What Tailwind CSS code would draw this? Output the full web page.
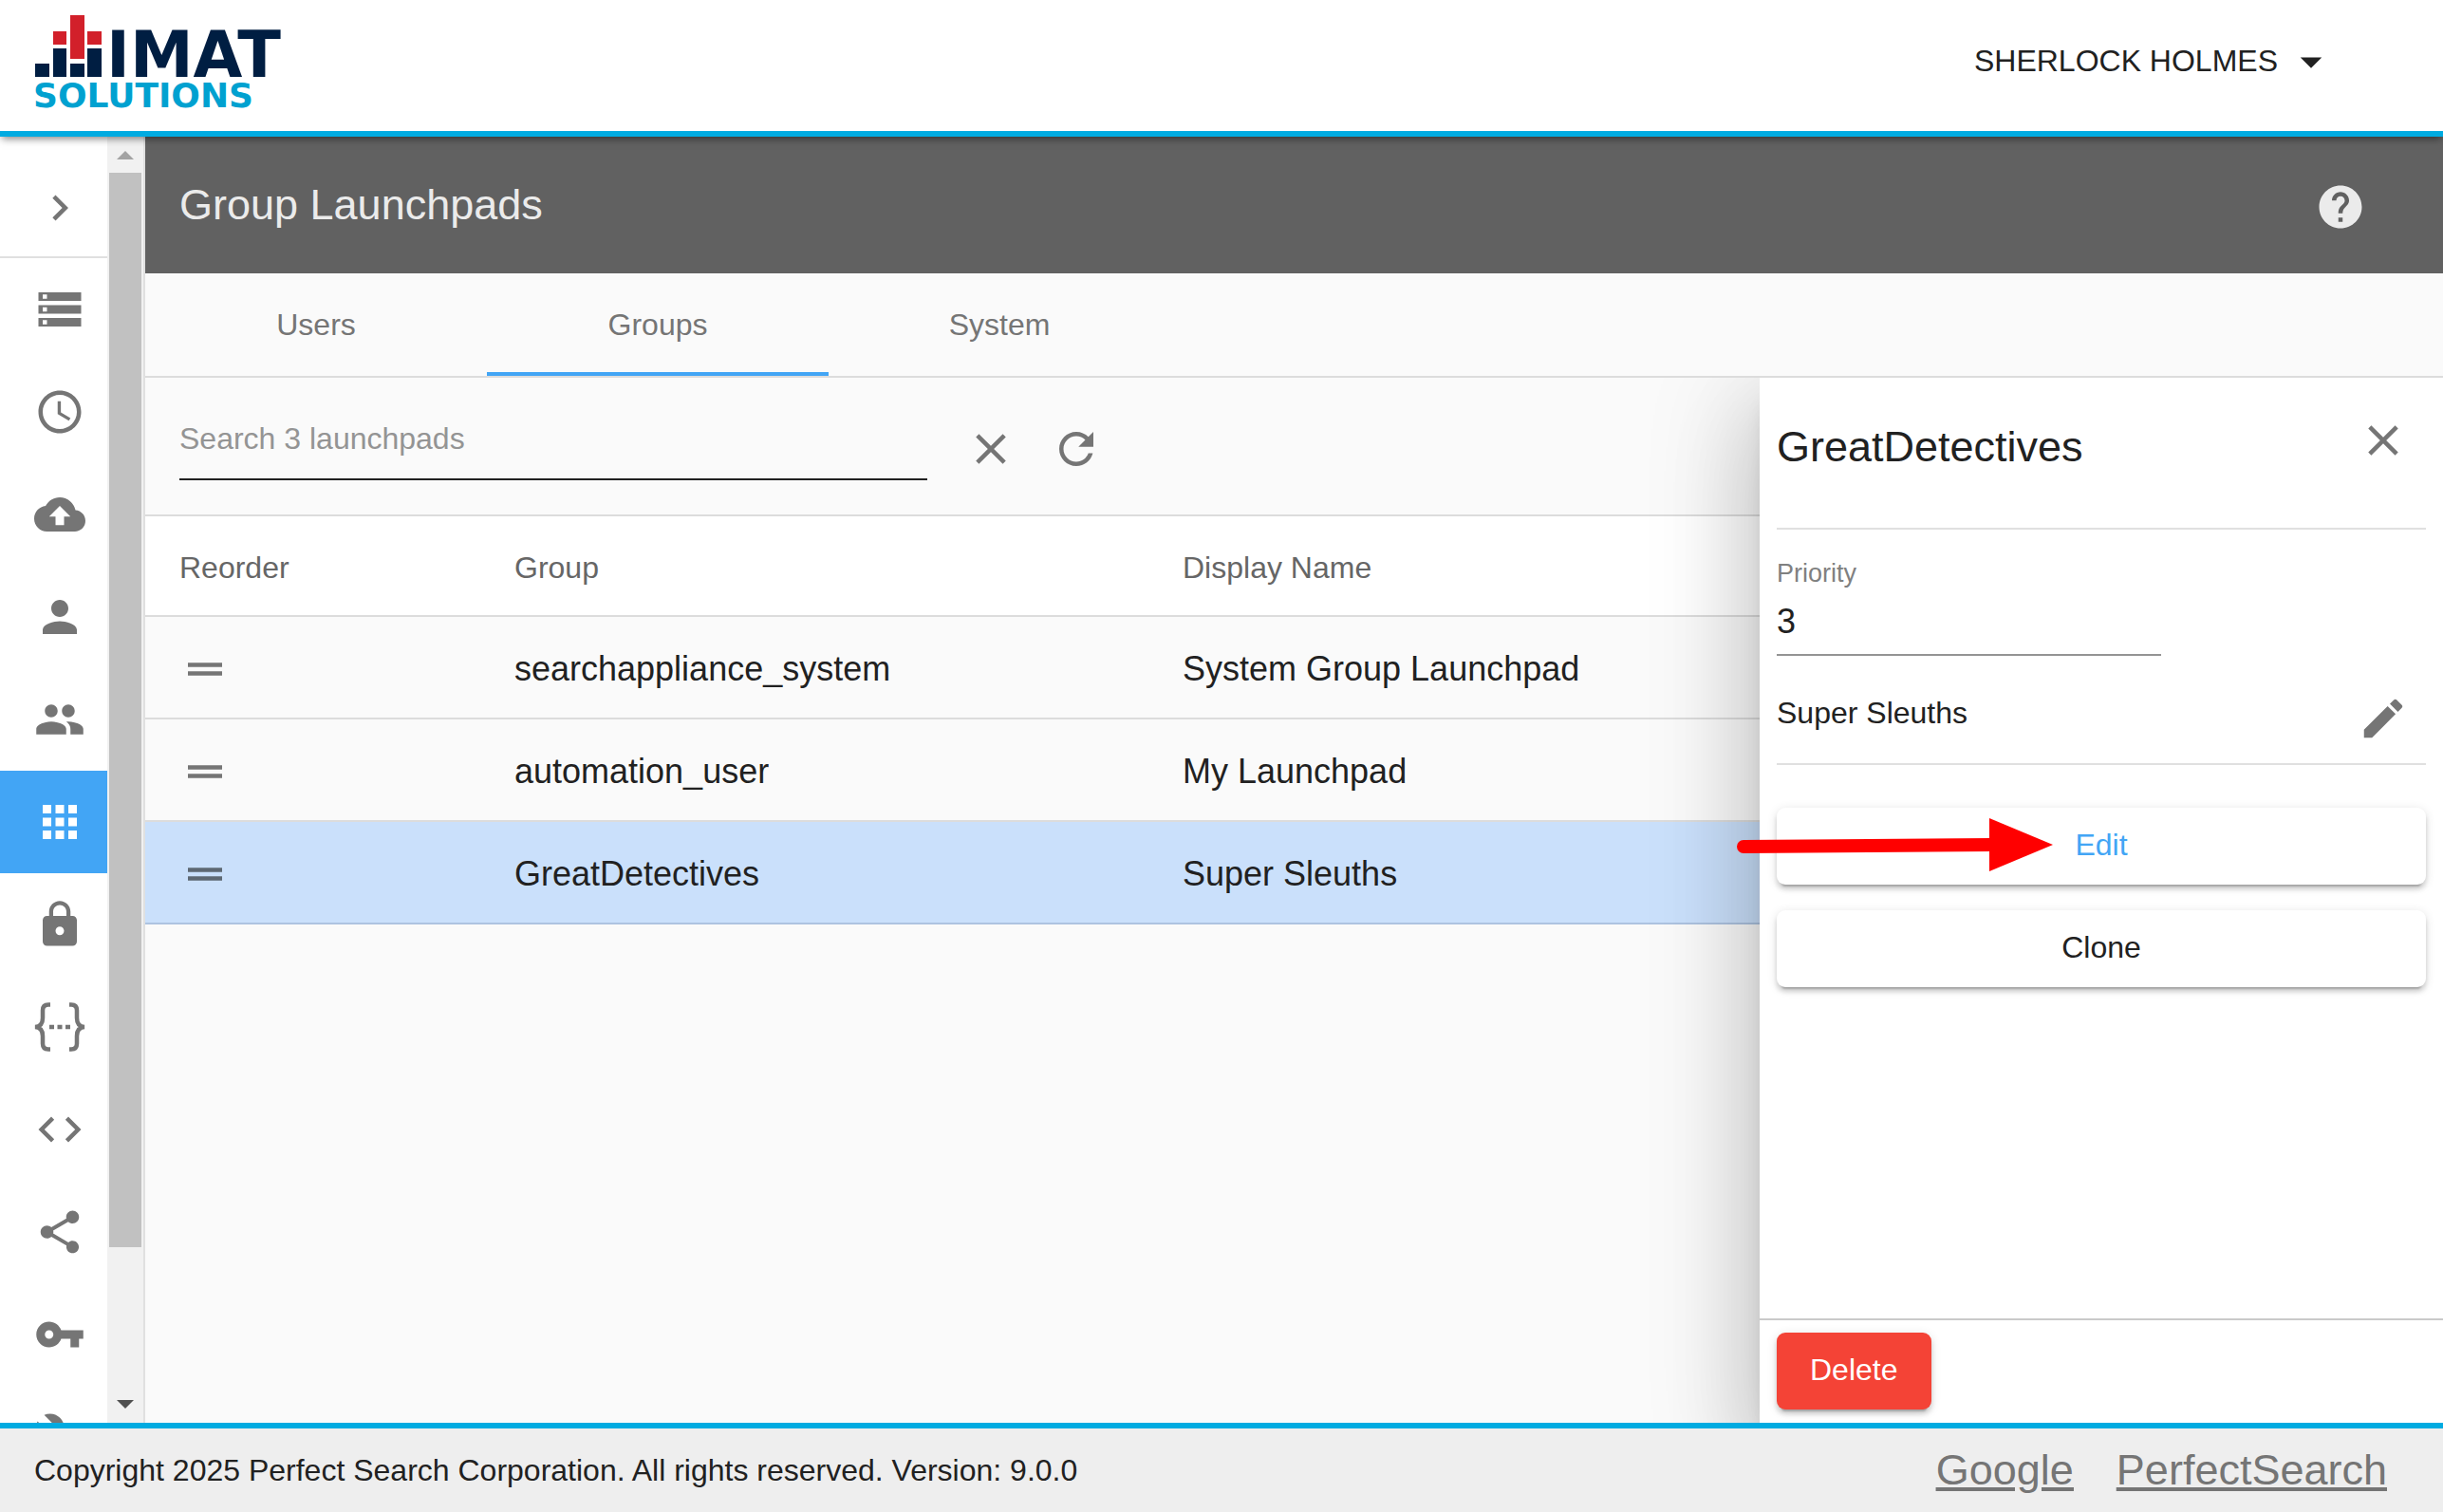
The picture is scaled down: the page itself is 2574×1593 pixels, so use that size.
<!DOCTYPE html>
<html lang="en">
<head>
<meta charset="utf-8">
<meta name="viewport" content="width=device-width, initial-scale=1">
<title>Group Launchpads</title>
<script src="https://cdn.jsdelivr.net/npm/@tailwindcss/browser@4"></script>
</head>
<body class="flex h-screen flex-col overflow-hidden bg-white font-['Liberation_Sans',Arial,sans-serif] text-[32px] leading-10 text-[#212121]">

<header class="relative z-20 flex h-36 shrink-0 items-start justify-between border-b-6 border-[#00abe1] bg-white pr-28 pl-9 shadow-[0_4px_8px_-2px_rgba(0,0,0,0.5)]">
  <a href="#" aria-label="IMAT Solutions" class="flex flex-col pt-4">
    <svg viewBox="0 0 290 110" class="h-[110px] w-[290px] overflow-visible" role="img">
      <g fill="#001e42">
        <rect x="1" y="51" width="15" height="14"/>
        <rect x="20" y="35" width="14" height="30"/>
        <rect x="38" y="51" width="15" height="14"/>
        <rect x="56" y="35" width="15" height="30"/>
      </g>
      <g fill="#d2202a">
        <rect x="20" y="17" width="14" height="14"/>
        <rect x="38" y="0" width="15" height="46"/>
        <rect x="56" y="17" width="15" height="14"/>
      </g>
      <text x="76" y="65" fill="#001e42" class="font-['DejaVu_Sans',sans-serif] text-[67px] font-bold">IMAT</text>
      <text x="-1" y="97" fill="#00a1d0" class="font-['DejaVu_Sans',sans-serif] text-[36px] font-bold">SOLUTIONS</text>
    </svg>
  </a>
  <button type="button" class="flex items-center gap-2 pt-[38px]">
    <span class="pb-[3px]">SHERLOCK HOLMES</span>
    <svg viewBox="0 0 24 24" class="size-[54px] fill-current"><path d="M7 10l5 5 5-5z"/></svg>
  </button>
</header>

<div class="flex min-h-0 flex-1">
  <aside class="flex w-[153px] shrink-0 border-r-2 border-[#e0e0e0] bg-white">
    <nav class="flex w-[113px] flex-col overflow-hidden text-[#757575]" aria-label="Main">
      <button type="button" aria-label="Expand" class="flex h-32 shrink-0 items-center justify-center border-b-2 border-[#e0e0e0] pt-6 pl-3">
        <svg viewBox="0 0 24 24" class="size-[54px] fill-current"><path d="M10 6L8.590 7.410 13.170 12l-4.580 4.590L10 18l6-6z"/></svg>
      </button>
      <a href="#" aria-label="Storage" class="flex h-[108px] shrink-0 items-center pl-9"><svg viewBox="0 0 24 24" class="size-[54px] fill-current"><path d="M2 20h20v-4H2v4zm2-3h2v2H4v-2zM2 4v4h20V4H2zm4 3H4V5h2v2zm-4 7h20v-4H2v4zm2-3h2v2H4v-2z"/></svg></a>
      <a href="#" aria-label="Schedule" class="flex h-[108px] shrink-0 items-center pl-9"><svg viewBox="0 0 24 24" class="size-[54px] fill-current"><path d="M11.990 2C6.470 2 2 6.480 2 12s4.470 10 9.990 10C17.520 22 22 17.520 22 12S17.520 2 11.990 2zM12 20c-4.420 0-8-3.580-8-8s3.580-8 8-8 8 3.580 8 8-3.580 8-8 8zm.5-13H11v6l5.250 3.150.750-1.230-4.500-2.670z"/></svg></a>
      <a href="#" aria-label="Upload" class="flex h-[108px] shrink-0 items-center pl-9"><svg viewBox="0 0 24 24" class="size-[54px] fill-current"><path d="M19.350 10.040C18.670 6.590 15.640 4 12 4 9.110 4 6.600 5.640 5.350 8.040 2.340 8.360 0 10.910 0 14c0 3.310 2.690 6 6 6h13c2.760 0 5-2.240 5-5 0-2.640-2.050-4.780-4.650-4.960zM14 13v4h-4v-4H7l5-5 5 5h-3z"/></svg></a>
      <a href="#" aria-label="Users" class="flex h-[108px] shrink-0 items-center pl-9"><svg viewBox="0 0 24 24" class="size-[54px] fill-current"><path d="M12 12c2.210 0 4-1.790 4-4s-1.790-4-4-4-4 1.790-4 4 1.790 4 4 4zm0 2c-2.670 0-8 1.340-8 4v2h16v-2c0-2.660-5.330-4-8-4z"/></svg></a>
      <a href="#" aria-label="Groups" class="flex h-[108px] shrink-0 items-center pl-9"><svg viewBox="0 0 24 24" class="size-[54px] fill-current"><path d="M16 11c1.660 0 2.990-1.340 2.990-3S17.660 5 16 5c-1.660 0-3 1.340-3 3s1.340 3 3 3zm-8 0c1.660 0 2.990-1.340 2.990-3S9.660 5 8 5C6.340 5 5 6.340 5 8s1.340 3 3 3zm0 2c-2.330 0-7 1.170-7 3.500V19h14v-2.500c0-2.330-4.670-3.500-7-3.500zm8 0c-.290 0-.620.020-.970.050 1.160.840 1.970 1.970 1.970 3.450V19h6v-2.500c0-2.330-4.670-3.500-7-3.500z"/></svg></a>
      <a href="#" aria-label="Launchpads" aria-current="page" class="flex h-[108px] shrink-0 items-center bg-[#42a5f5] pl-9 text-white"><svg viewBox="0 0 24 24" class="size-[54px] fill-current"><path d="M4 8h4V4H4v4zm6 12h4v-4h-4v4zm-6 0h4v-4H4v4zm0-6h4v-4H4v4zm6 0h4v-4h-4v4zm6-10v4h4V4h-4zm-6 4h4V4h-4v4zm6 6h4v-4h-4v4zm0 6h4v-4h-4v4z"/></svg></a>
      <a href="#" aria-label="Security" class="flex h-[108px] shrink-0 items-center pl-9"><svg viewBox="0 0 24 24" class="size-[54px] fill-current"><path d="M18 8h-1V6c0-2.760-2.240-5-5-5S7 3.240 7 6v2H6c-1.100 0-2 .900-2 2v10c0 1.100.900 2 2 2h12c1.100 0 2-.900 2-2V10c0-1.100-.900-2-2-2zm-6 9c-1.100 0-2-.900-2-2s.900-2 2-2 2 .900 2 2-.900 2-2 2zm3.100-9H8.900V6c0-1.710 1.390-3.100 3.100-3.100 1.710 0 3.100 1.390 3.100 3.100v2z"/></svg></a>
      <a href="#" aria-label="Variables" class="flex h-[108px] shrink-0 items-center pl-9"><svg viewBox="0 0 54 54" class="size-[54px]" fill="none" stroke="currentColor" stroke-width="4.500"><path d="M17 3.500h-2q-6 0-6 6v8q0 9-8 9.500 8 .500 8 9.500v8q0 6 6 6h2M37 3.500h2q6 0 6 6v8q0 9 8 9.500-8 .500-8 9.500v8q0 6-6 6h-2"/><path d="M16 27h5M24.500 27h5M33 27h5"/></svg></a>
      <a href="#" aria-label="Code" class="flex h-[108px] shrink-0 items-center pl-9"><svg viewBox="0 0 24 24" class="size-[54px] fill-current"><path d="M9.400 16.600L4.800 12l4.600-4.600L8 6l-6 6 6 6 1.400-1.400zm5.200 0l4.600-4.600-4.600-4.600L16 6l6 6-6 6-1.400-1.400z"/></svg></a>
      <a href="#" aria-label="Share" class="flex h-[108px] shrink-0 items-center pl-9"><svg viewBox="0 0 24 24" class="size-[54px] fill-current"><path d="M18 16.080c-.760 0-1.440.300-1.960.770L8.910 12.700c.050-.230.090-.460.090-.700s-.040-.470-.090-.700l7.050-4.110c.540.500 1.250.810 2.040.810 1.660 0 3-1.340 3-3s-1.340-3-3-3-3 1.340-3 3c0 .240.040.470.090.700L8.040 9.810C7.500 9.310 6.790 9 6 9c-1.660 0-3 1.340-3 3s1.340 3 3 3c.790 0 1.500-.310 2.040-.810l7.120 4.160c-.050.210-.080.430-.080.650 0 1.610 1.310 2.920 2.920 2.920 1.610 0 2.920-1.310 2.920-2.920s-1.310-2.920-2.920-2.920z"/></svg></a>
      <a href="#" aria-label="Keys" class="flex h-[108px] shrink-0 items-center pl-9"><svg viewBox="0 0 24 24" class="size-[54px] fill-current"><path d="M12.650 10C11.830 7.670 9.610 6 7 6c-3.310 0-6 2.690-6 6s2.690 6 6 6c2.610 0 4.830-1.670 5.650-4H17v4h4v-4h2v-4H12.650zM7 14c-1.100 0-2-.900-2-2s.900-2 2-2 2 .900 2 2-.900 2-2 2z"/></svg></a>
      <a href="#" aria-label="Tools" class="flex h-[108px] shrink-0 items-center pl-9"><svg viewBox="0 0 24 24" class="size-[54px] fill-current"><path d="M22.700 19l-9.100-9.100c.900-2.300.400-5-1.500-6.900-2-2-5-2.400-7.400-1.300L9 6 6 9 1.600 4.700C.400 7.100.900 10.100 2.900 12.100c1.900 1.900 4.600 2.400 6.900 1.500l9.100 9.100c.400.400 1 .400 1.400 0l2.300-2.300c.500-.400.500-1.100.100-1.400z"/></svg></a>
    </nav>
    <div class="flex w-[38px] flex-col items-center bg-[#f1f1f1] pt-[15px] pb-[15px]" aria-hidden="true">
      <svg viewBox="0 0 18 9" class="h-[9px] w-[18px] shrink-0 fill-[#a3a3a3]"><path d="M0 9L9 0l9 9z"/></svg>
      <div class="mt-[14px] mb-[14px] flex w-[34px] flex-1 flex-col">
        <div class="h-[88.500%] bg-[#c1c1c1]"></div>
      </div>
      <svg viewBox="0 0 18 9" class="h-[9px] w-[18px] shrink-0 fill-[#505050]"><path d="M0 0h18L9 9z"/></svg>
    </div>
  </aside>

  <main class="flex min-w-0 flex-1 flex-col bg-[#fafafa]">
    <div class="flex h-36 shrink-0 items-center justify-between bg-[#616161] pr-[81px] pl-9 text-[#ebebeb]">
      <h1 class="text-[45px] leading-[54px]">Group Launchpads</h1>
      <button type="button" aria-label="Help" class="pt-1"><svg viewBox="0 0 24 24" class="size-[54px] fill-current"><path d="M12 2C6.480 2 2 6.480 2 12s4.480 10 10 10 10-4.480 10-10S17.520 2 12 2zm1 17h-2v-2h2v2zm2.070-7.750l-.900.920C13.450 12.900 13 13.500 13 15h-2v-.500c0-1.100.450-2.100 1.170-2.830l1.240-1.260c.370-.360.590-.860.590-1.410 0-1.100-.900-2-2-2s-2 .900-2 2H8c0-2.210 1.790-4 4-4s4 1.790 4 4c0 .880-.360 1.680-.930 2.250z"/></svg></button>
    </div>
    <div role="tablist" class="flex h-[110px] shrink-0 border-b-2 border-[#dcdcdc] text-[#757575]">
      <button type="button" role="tab" class="w-[360px] border-b-4 border-transparent pt-[3px]">Users</button>
      <button type="button" role="tab" aria-selected="true" class="w-[360px] border-b-4 border-[#42a5f5] pt-[3px]">Groups</button>
      <button type="button" role="tab" class="w-[360px] border-b-4 border-transparent pt-[3px]">System</button>
    </div>

    <div class="relative flex min-h-0 flex-1 flex-col overflow-hidden">
      <div class="flex h-[146px] shrink-0 items-start border-b-2 border-[#dcdcdc] pt-[30px] pl-9 text-[#757575]">
        <input type="text" aria-label="Search launchpads" placeholder="Search 3 launchpads" class="h-[78px] w-[788px] border-b-2 border-[#212121] pb-2 outline-none placeholder:text-[#949494]">
        <button type="button" aria-label="Clear" class="ml-[22px] flex size-[90px] items-center justify-center"><svg viewBox="0 0 24 24" class="size-[54px] fill-current"><path d="M19 6.410L17.590 5 12 10.590 6.410 5 5 6.410 10.590 12 5 17.590 6.410 19 12 13.410 17.590 19 19 17.590 13.410 12z"/></svg></button>
        <button type="button" aria-label="Refresh" class="flex size-[90px] items-center justify-center"><svg viewBox="0 0 24 24" class="size-[54px] fill-current"><path d="M17.650 6.350C16.200 4.900 14.210 4 12 4c-4.420 0-7.990 3.580-7.990 8s3.570 8 7.990 8c3.730 0 6.840-2.550 7.730-6h-2.080c-.820 2.330-3.040 4-5.650 4-3.310 0-6-2.690-6-6s2.690-6 6-6c1.660 0 3.140.690 4.220 1.780L13 11h7V4l-2.350 2.350z"/></svg></button>
      </div>
      <table class="w-full table-fixed border-separate border-spacing-0 text-left text-[36px]">
        <thead class="bg-white text-[32px] text-[#666666]">
          <tr>
            <th class="h-[106px] w-[389px] border-b-2 border-[#dcdcdc] pt-[3px] pl-9 font-normal">Reorder</th>
            <th class="w-[704px] border-b-2 border-[#dcdcdc] pt-[3px] font-normal">Group</th>
            <th class="border-b-2 border-[#dcdcdc] pt-[3px] font-normal">Display Name</th>
          </tr>
        </thead>
        <tbody>
          <tr>
            <td class="h-[108px] border-b-2 border-[#dcdcdc] pt-[3px] pl-9 text-[#757575]"><svg viewBox="0 0 24 24" class="size-[54px] fill-current"><path d="M20 9H4v2h16V9zM4 15h16v-2H4v2z"/></svg></td>
            <td class="border-b-2 border-[#dcdcdc] pt-[3px]">searchappliance_system</td>
            <td class="border-b-2 border-[#dcdcdc] pt-[3px]">System Group Launchpad</td>
          </tr>
          <tr>
            <td class="h-[108px] border-b-2 border-[#dcdcdc] pt-[3px] pl-9 text-[#757575]"><svg viewBox="0 0 24 24" class="size-[54px] fill-current"><path d="M20 9H4v2h16V9zM4 15h16v-2H4v2z"/></svg></td>
            <td class="border-b-2 border-[#dcdcdc] pt-[3px]">automation_user</td>
            <td class="border-b-2 border-[#dcdcdc] pt-[3px]">My Launchpad</td>
          </tr>
          <tr class="bg-[#cae0fb]">
            <td class="h-[108px] border-b-2 border-[#adc3e0] pt-[3px] pl-9 text-[#5d6873]"><svg viewBox="0 0 24 24" class="size-[54px] fill-current"><path d="M20 9H4v2h16V9zM4 15h16v-2H4v2z"/></svg></td>
            <td class="border-b-2 border-[#adc3e0] pt-[3px]">GreatDetectives</td>
            <td class="border-b-2 border-[#adc3e0] pt-[3px]">Super Sleuths</td>
          </tr>
        </tbody>
      </table>

      <section aria-label="Launchpad details" class="absolute inset-y-0 right-0 flex w-[720px] flex-col bg-white shadow-[0_18px_22px_-11px_rgba(0,0,0,0.2),0_54px_86px_7px_rgba(0,0,0,0.14),0_20px_104px_18px_rgba(0,0,0,0.12)]">
        <div class="flex flex-1 flex-col px-[18px]">
          <div class="flex h-40 shrink-0 items-start justify-between border-b-2 border-[#e0e0e0] pt-[21px]">
            <h2 class="pt-[25px] text-[45px] leading-[54px]">GreatDetectives</h2>
            <button type="button" aria-label="Close" class="flex size-[90px] items-center justify-center text-[#757575]"><svg viewBox="0 0 24 24" class="size-[54px] fill-current"><path d="M19 6.410L17.590 5 12 10.590 6.410 5 5 6.410 10.590 12 5 17.590 6.410 19 12 13.410 17.590 19 19 17.590 13.410 12z"/></svg></button>
          </div>
          <div class="flex flex-col items-start pt-[30px]">
            <label for="priority" class="text-[27px] leading-8 text-[#808080]">Priority</label>
            <input id="priority" type="text" value="3" class="h-[71px] w-[405px] border-b-2 border-[#949494] text-[36px] outline-none">
          </div>
          <div class="flex h-[115px] items-center justify-between border-b-2 border-[#e0e0e0]">
            <span class="pt-[6px]">Super Sleuths</span>
            <button type="button" aria-label="Rename" class="flex size-[90px] items-center justify-center pt-[18px] text-[#757575]"><svg viewBox="0 0 24 24" class="size-[54px] fill-current"><path d="M3 17.250V21h3.750L17.810 9.940l-3.750-3.750L3 17.250zM20.710 7.040c.390-.390.390-1.020 0-1.410l-2.340-2.340c-.390-.390-1.020-.390-1.410 0l-1.830 1.830 3.750 3.750 1.830-1.830z"/></svg></button>
          </div>
          <div class="relative mt-[45px] flex flex-col gap-[27px]">
            <button type="button" class="h-[81px] rounded-[9px] bg-white pb-[3px] text-[#42a5f5] shadow-[0_7px_2px_-5px_rgba(0,0,0,0.2),0_5px_5px_0_rgba(0,0,0,0.14),0_2px_11px_0_rgba(0,0,0,0.12)]">Edit</button>
            <button type="button" class="h-[81px] rounded-[9px] bg-white pb-[3px] shadow-[0_7px_2px_-5px_rgba(0,0,0,0.2),0_5px_5px_0_rgba(0,0,0,0.14),0_2px_11px_0_rgba(0,0,0,0.12)]">Clone</button>
            <svg viewBox="0 0 336 60" class="absolute top-[10px] -left-[43px] h-[60px] w-[336px]" aria-hidden="true"><path d="M8 31L270 29" stroke="#f00" stroke-width="14" stroke-linecap="round"/><path d="M267 1v56l67-28z" fill="#f00"/></svg>
          </div>
        </div>
        <div class="flex h-[110px] shrink-0 items-start border-t-2 border-[#cacaca] px-[18px] pt-[13px]">
          <button type="button" class="h-[81px] rounded-[9px] bg-[#f44336] px-[35px] pb-[3px] text-white shadow-[0_7px_2px_-5px_rgba(0,0,0,0.2),0_5px_5px_0_rgba(0,0,0,0.14),0_2px_11px_0_rgba(0,0,0,0.12)]">Delete</button>
        </div>
      </section>
    </div>
  </main>
</div>

<footer class="relative z-10 flex h-[94px] shrink-0 items-center justify-between border-t-6 border-[#00abe1] bg-[#eeeeee] pr-[59px] pl-9">
  <p>Copyright 2025 Perfect Search Corporation. All rights reserved. Version: 9.0.0</p>
  <nav aria-label="Links" class="flex gap-[45px] text-[45px] leading-[54px] text-[#757575] underline">
    <a href="#">Google</a>
    <a href="#">PerfectSearch</a>
  </nav>
</footer>
</body>
</html>
